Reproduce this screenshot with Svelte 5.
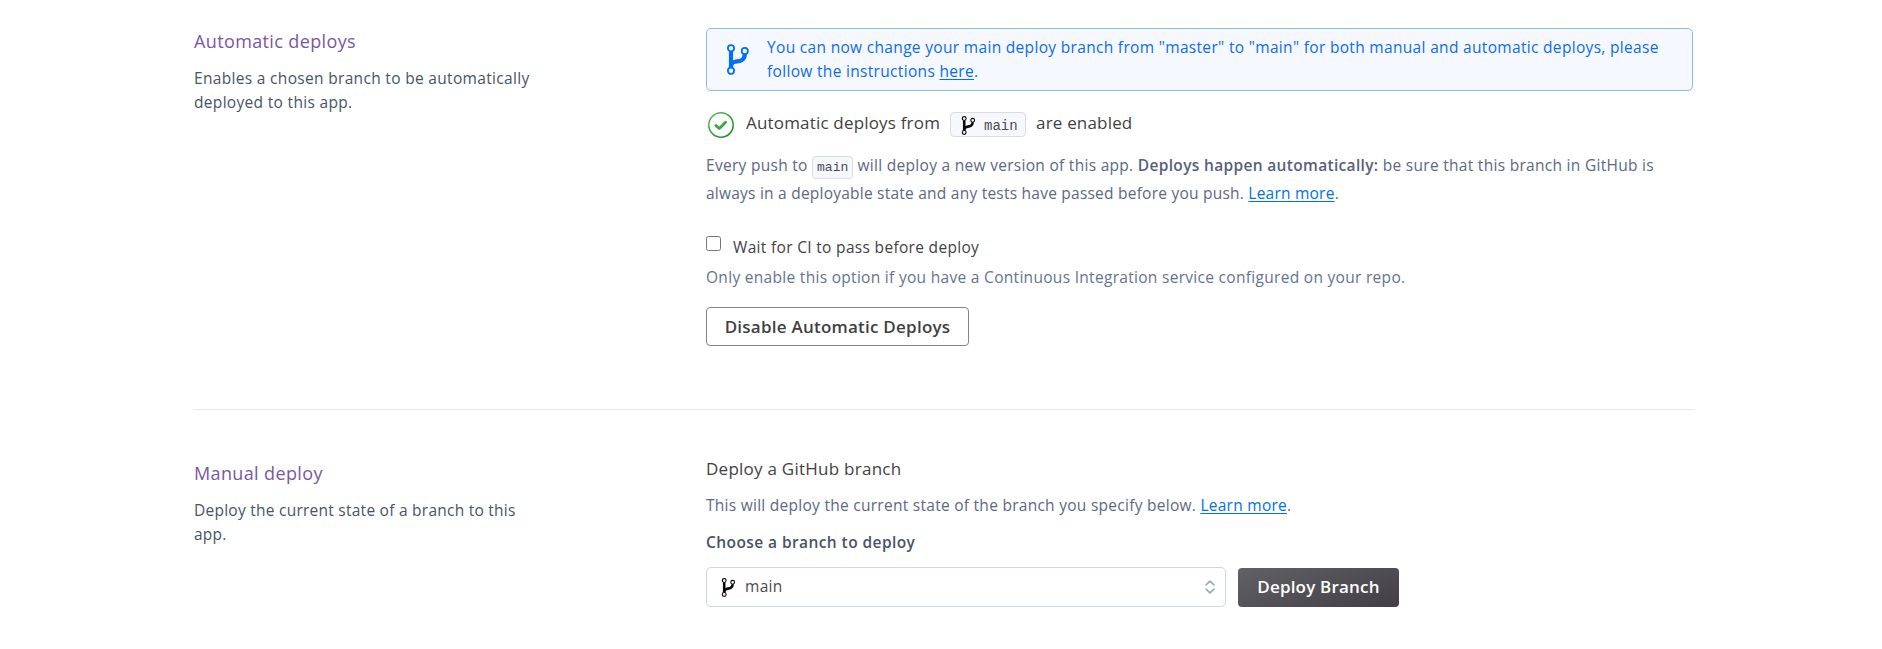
<script>
  let waitForCi = $state(false);
</script>

{#snippet branch(w, h)}
  <svg class="branch" width={w} height={h} viewBox="0 0 22 31" fill="none" stroke="currentColor">
    <path d="M4 7.5V24" stroke-width="4.2" />
    <path d="M4 22C5.4 15.5 10.5 18.6 14.6 16.2C17.2 14.6 17.8 13 17.8 10" stroke-width="4.2" />
    <circle cx="4" cy="4.2" r="3.1" stroke-width="1.8" />
    <circle cx="17.8" cy="7" r="3.1" stroke-width="1.8" />
    <circle cx="4" cy="26.8" r="3.1" stroke-width="1.8" />
  </svg>
{/snippet}

<main>
  <section class="auto">
    <aside>
      <h2>Automatic deploys</h2>
      <p>Enables a chosen branch to be automatically<br />deployed to this app.</p>
    </aside>
    <div class="content">
      <div class="alert">
        {@render branch(22, 31)}
        <p>
          You can now change your main deploy branch from "master" to "main" for both manual and automatic deploys, please<br />follow the instructions <a href="#here">here</a>.
        </p>
      </div>
      <div class="status">
        <svg class="check" width="26" height="26" viewBox="0 0 26 26" fill="none">
          <defs>
            <linearGradient id="ring" x1="0" y1="0" x2="1" y2="1">
              <stop offset="0" stop-color="#5fba63" />
              <stop offset="1" stop-color="#14871b" />
            </linearGradient>
          </defs>
          <circle cx="13" cy="13" r="12.2" stroke="url(#ring)" stroke-width="1.5" />
          <path d="M8 13.6L11.3 16.5L17.6 10.2" stroke="#3da643" stroke-width="2.8" stroke-linecap="round" stroke-linejoin="round" />
        </svg>
        <h3>Automatic deploys from</h3>
        <span class="badge">{@render branch(15, 19)}<span>main</span></span>
        <h3>are enabled</h3>
      </div>
      <p class="info">
        Every push to <code>main</code> will deploy a new version of this app. <strong>Deploys happen automatically:</strong> be sure that this branch in GitHub is<br /><span class="second">always in a deployable state and any tests have passed before you push. <a href="#auto">Learn more</a>.</span>
      </p>
      <label class="wait"><input type="checkbox" bind:checked={waitForCi} /><span>Wait for CI to pass before deploy</span></label>
      <p class="help">Only enable this option if you have a Continuous Integration service configured on your repo.</p>
      <button class="outline">Disable Automatic Deploys</button>
    </div>
  </section>

  <section class="manual">
    <aside>
      <h2>Manual deploy</h2>
      <p>Deploy the current state of a branch to this<br />app.</p>
    </aside>
    <div class="content">
      <h3>Deploy a GitHub branch</h3>
      <p class="note">This will deploy the current state of the branch you specify below. <a href="#manual">Learn more</a>.</p>
      <p class="label">Choose a branch to deploy</p>
      <div class="row">
        <div class="select">
          {@render branch(15, 19)}
          <span>main</span>
          <svg class="chevrons" width="12" height="14" viewBox="0 0 12 14" fill="none" stroke="#9ea9bf" stroke-width="1.7" stroke-linecap="round" stroke-linejoin="round">
            <path d="M2 4.8L6 1.2L10 4.8M2 9.2L6 12.8L10 9.2" />
          </svg>
        </div>
        <button class="solid">Deploy Branch</button>
      </div>
    </div>
  </section>
</main>

<style>
  :global(body) { background: #fff; }
  main {
    width: 1500px;
    margin-left: 194px;
    padding-top: 28px;
    font: 15.5px/24px "Open Sans", "Noto Sans", sans-serif;
    letter-spacing: 0.32px;
    color: #475467;
    white-space: nowrap;
  }
  h2, h3, p { margin: 0; font-weight: 400; }
  section { display: flex; }
  aside { width: 512px; flex: none; }
  .content { width: 988px; flex: none; }
  .auto { height: 381px; border-bottom: 1px solid #e8e7ef; }
  aside h2 {
    margin: 1px 0 13px;
    font-size: 18px;
    line-height: 24px;
    letter-spacing: 0.37px;
    color: #79589f;
  }
  h3 { font-size: 17px; line-height: 24px; letter-spacing: 0.25px; color: #3f3f44; }
  a { color: #0170ea; text-underline-offset: 2px; text-decoration-thickness: 1px; }
  .branch { display: block; flex: none; }
  .alert {
    display: flex;
    box-sizing: border-box;
    width: 987px;
    height: 63px;
    padding: 6px 0 0 20px;
    border: 1px solid #8bbaf0;
    border-radius: 5px;
    background: #f5f9ff;
    color: #0d6ce8;
  }
  .alert .branch { margin: 9px 18px 0 0; color: #0170f5; }
  .status { display: flex; height: 26px; margin-top: 21px; padding-left: 2px; }
  .status h3 { line-height: 21px; letter-spacing: 0.18px; }
  .check { margin-right: 12px; }
  .badge {
    display: flex;
    box-sizing: border-box;
    width: 76px;
    height: 25px;
    margin: 0 10px;
    padding: 3px 0 0 10px;
    gap: 8px;
    border: 1px solid #d9dce3;
    border-radius: 4px;
    background: #f7f8fb;
    color: #0a0a0a;
  }
  .badge span, code { font: 14px/20px "Liberation Mono", monospace; letter-spacing: 0; color: #474c56; }
  .info { margin-top: 13px; line-height: 28px; color: #5c6885; letter-spacing: 0.29px; }
  .second { letter-spacing: 0.23px; }
  code {
    padding: 3px 4px;
    border: 1px solid #d9dce3;
    border-radius: 4px;
    background: #f7f8fb;
    font-size: 13px;
  }
  strong { font-weight: 600; color: #56617b; letter-spacing: 0.33px; }
  .wait { display: flex; margin-top: 28px; color: #3f3f44; }
  .wait input { width: 15px; height: 15px; margin: 1px 12px 0 0; }
  .help { margin-top: 6px; color: #64748f; letter-spacing: 0.3px; }
  button { display: block; box-sizing: border-box; padding: 0; font: 600 17px/24px "Open Sans", sans-serif; border-radius: 4px; }
  .outline { width: 263px; height: 39px; margin-top: 18px; border: 1px solid #84848a; background: #fff; color: #3f3f44; letter-spacing: 0.24px; }
  .manual { padding-top: 47px; }
  .manual aside { padding-top: 3px; }
  .manual aside p { letter-spacing: 0.25px; }
  .note { margin-top: 12px; color: #5c6885; letter-spacing: 0.27px; }
  .label { margin-top: 13px; font-weight: 600; letter-spacing: 0.42px; color: #475467; }
  .row { display: flex; align-items: flex-start; margin-top: 13px; }
  .select {
    display: flex;
    align-items: center;
    box-sizing: border-box;
    width: 520px;
    height: 40px;
    padding: 0 9px 0 14px;
    border: 1px solid #cfd7e6;
    border-radius: 5px;
    box-shadow: 0 1px 2px #0000000a;
    color: #0a0a0a;
  }
  .select span { flex: 1; margin: -2px 0 0 9px; color: #4a4a50; }
  .solid { width: 161px; height: 39px; margin: 1px 0 0 12px; padding-bottom: 2px; border: 0; background: linear-gradient(160deg, #626166, #413f45); color: #fff; letter-spacing: 0.2px; }
</style>
